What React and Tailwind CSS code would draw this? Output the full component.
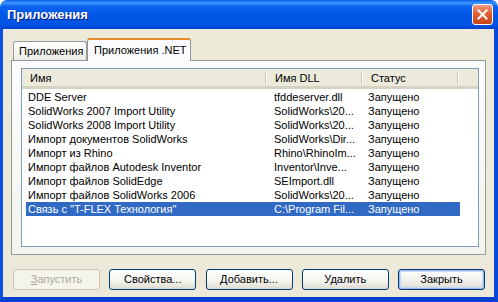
import React from "react";

const rows = [
  ["DDE Server", "tfddeserver.dll", "Запущено"],
  ["SolidWorks 2007 Import Utility", "SolidWorks\\20...", "Запущено"],
  ["SolidWorks 2008 Import Utility", "SolidWorks\\20...", "Запущено"],
  ["Импорт документов SolidWorks", "SolidWorks\\Dir...", "Запущено"],
  ["Импорт из Rhino", "Rhino\\RhinoIm...", "Запущено"],
  ["Импорт файлов Autodesk Inventor", "Inventor\\Inve...", "Запущено"],
  ["Импорт файлов SolidEdge", "SEImport.dll", "Запущено"],
  ["Импорт файлов SolidWorks 2006", "SolidWorks\\20...", "Запущено"],
  ["Связь с \"T-FLEX Технология\"", "C:\\Program Fil...", "Запущено"],
];

function Btn({ children, disabled, def }) {
  return (
    <div
      className={
        "w-[87px] h-[21px] rounded-[3px] border flex items-center justify-center " +
        (disabled
          ? "border-[#C9C7BA] bg-[#F5F4EA] text-[#ACA899]"
          : def
          ? "border-[#003C74] bg-[linear-gradient(to_bottom,#ffffff,#f0f0ea_60%,#dcd9cc)] text-black shadow-[inset_0_0_0_1px_#9DB8F0,inset_0_0_0_2px_#C7D9F8]"
          : "border-[#003C74] bg-[linear-gradient(to_bottom,#ffffff,#f3f3ee_60%,#dedbcf)] text-black")
      }
    >
      {children}
    </div>
  );
}

export default function App() {
  return (
    <div
      className="w-[498px] h-[302px] flex flex-col bg-white"
      style={{ fontFamily: '"Liberation Sans", Arial, sans-serif' }}
    >
      {/* Title bar */}
      <div className="h-[29px] shrink-0 rounded-t-[7px] bg-[linear-gradient(to_bottom,#0A5EEA_0%,#3D95FF_10%,#0C63F0_22%,#0055E5_55%,#0054E3_85%,#0043CF_100%)] flex items-center pl-[7px] pr-[5px]">
        <div className="text-white font-bold text-[13px] [text-shadow:1px_1px_0_#0A1F8A] flex-1 pt-[1px]">
          Приложения
        </div>
        <div className="w-[21px] h-[21px] rounded-[3px] border border-white bg-[linear-gradient(to_bottom,#F09C80,#E0602F_45%,#C8441A)] flex items-center justify-center">
          <svg width="11" height="11" viewBox="0 0 11 11">
            <path d="M1.5 1.5 L9.5 9.5 M9.5 1.5 L1.5 9.5" stroke="white" strokeWidth="2" strokeLinecap="square" />
          </svg>
        </div>
      </div>

      {/* Body with frame */}
      <div className="flex-1 flex flex-col border-l-[3px] border-r-[4px] border-b-[5px] border-l-[#0A4FE0] border-r-[#0748D8] border-b-[#0740CF] bg-[#ECE9D8] px-[8px] text-[11px] text-black">
        {/* Tabs */}
        <div className="flex items-end pt-[9px] pl-[2px] h-[31px] whitespace-nowrap">
          <div className="shrink-0 h-[19px] px-[5px] border border-b-0 border-[#919B9C] rounded-t-[3px] bg-[linear-gradient(to_bottom,#ffffff,#ECEBE5)] flex items-center w-[74px]">
            Приложения
          </div>
          <div className="shrink-0 relative z-10 -mb-[1px] h-[23px] w-[104px] px-[6px] border border-b-0 border-[#919B9C] border-t-[#E68B2C] border-t-[2px] rounded-t-[3px] bg-[#FCFCFE] flex items-center">
            Приложения .NET
          </div>
        </div>
        {/* Panel */}
        <div className="h-[195px] border border-[#919B9C] bg-[linear-gradient(to_bottom,#FCFCFE,#F4F3EE)] pl-[9px] pr-[6px] pt-[7px]">
          <div className="h-[179px] border border-[#7F9DB9] bg-white flex flex-col">
            {/* Header */}
            <div className="h-[20px] shrink-0 flex bg-[#EBEADB] border-b-[3px] border-b-[#D6D2C2] text-black">
              {[
                ["Имя", "w-[245px]"],
                ["Имя DLL", "w-[96px]"],
                ["Статус", "w-[96px]"],
              ].map(([t, w]) => (
                <div key={t} className={`${w} relative flex items-center pl-[8px] pt-[1px]`}>
                  {t}
                  <div className="absolute right-0 top-[3px] bottom-[2px] w-[2px] border-l border-l-[#C7C5B2] border-r border-r-white" />
                </div>
              ))}
              <div className="flex-1" />
            </div>
            {/* Rows */}
            <div className="pt-[1px] pl-[4px]">
              {rows.map((r, i) => {
                const sel = i === rows.length - 1;
                return (
                  <div
                    key={i}
                    className={
                      "h-[14px] w-[434px] flex items-center whitespace-nowrap " +
                      (sel ? "bg-[#316AC5] text-white" : "text-black")
                    }
                  >
                    <div className="w-[241px] pl-[2px]">{r[0]}</div>
                    <div className="w-[96px] pl-[7px]">{r[1]}</div>
                    <div className="w-[97px] pl-[5px]">{r[2]}</div>
                  </div>
                );
              })}
            </div>
          </div>
        </div>
        {/* Buttons */}
        <div className="mt-[14px] pl-[2px] flex justify-between w-[474px]">
          <Btn disabled>
            <span>
              <span className="underline">З</span>апустить
            </span>
          </Btn>
          <Btn>Свойства...</Btn>
          <Btn>Добавить...</Btn>
          <Btn>Удалить</Btn>
          <Btn def>Закрыть</Btn>
        </div>
      </div>
    </div>
  );
}
